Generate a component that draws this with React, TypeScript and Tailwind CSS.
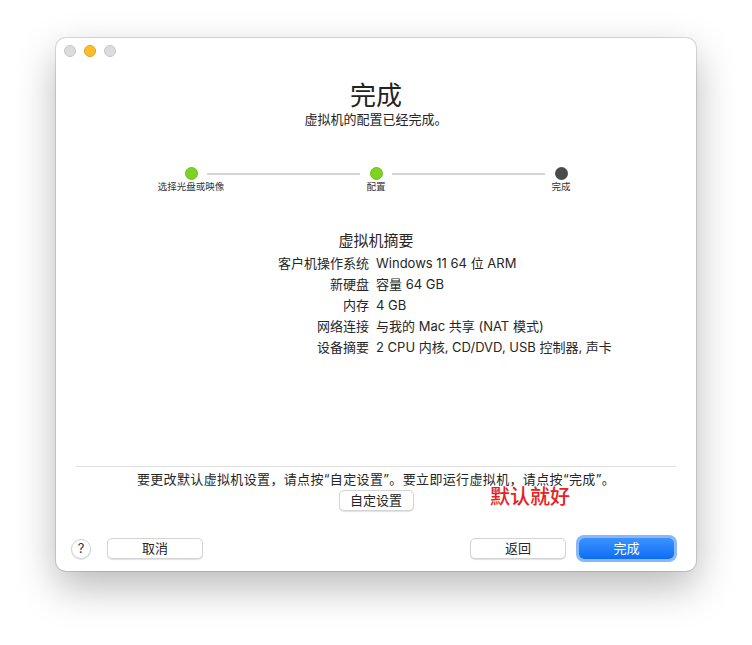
import React from "react";

const font = { fontFamily: 'Inter, "Noto Sans CJK SC", sans-serif' };

const steps = [
  { label: "选择光盘或映像", done: true },
  { label: "配置", done: true },
  { label: "完成", done: false },
];

const summary: [string, string][] = [
  ["客户机操作系统", "Windows 11 64 位 ARM"],
  ["新硬盘", "容量 64 GB"],
  ["内存", "4 GB"],
  ["网络连接", "与我的 Mac 共享 (NAT 模式)"],
  ["设备摘要", "2 CPU 内核, CD/DVD, USB 控制器, 声卡"],
];

function PlainButton({ children, className = "" }: { children: React.ReactNode; className?: string }) {
  return (
    <button
      className={
        "h-[21px] rounded-[5px] border border-[#d4d4d4] bg-white text-[13px] leading-none text-[#262626] shadow-[0_1px_1px_rgba(0,0,0,0.12)] " +
        className
      }
    >
      {children}
    </button>
  );
}

function Stepper() {
  return (
    <div className="flex items-start justify-center">
      {steps.map((s, i) => (
        <React.Fragment key={s.label}>
          {i > 0 && <div className="mx-[9.5px] mt-[5.5px] h-[2px] w-[153px] bg-[#d5d5d5]" />}
          <div className="flex w-[13px] flex-col items-center">
            <div
              className={
                s.done
                  ? "h-[13px] w-[13px] shrink-0 rounded-full border border-[#6cbf1c] bg-[#7ed321]"
                  : "h-[13px] w-[13px] shrink-0 rounded-full bg-[#4b4b4b]"
              }
            />
            <div className="mt-[1px] whitespace-nowrap text-[9.5px] leading-[12px] text-[#333]">{s.label}</div>
          </div>
        </React.Fragment>
      ))}
    </div>
  );
}

export default function App() {
  return (
    <div className="min-h-[645px] w-[752px] bg-white pl-[56px] pt-[38px]" style={font}>
      <div className="relative flex h-[533px] w-[640px] flex-col rounded-[10px] bg-white shadow-[0_16px_40px_rgba(0,0,0,0.28),0_0_0_1px_rgba(0,0,0,0.13)]">
        {/* title bar */}
        <div className="flex h-[26px] items-center gap-[8px] pl-[8px]">
          <span className="h-[12px] w-[12px] rounded-full border border-[#c8c8c8] bg-[#dcdcdc]" />
          <span className="h-[12px] w-[12px] rounded-full border border-[#e0a020] bg-[#febc2e]" />
          <span className="h-[12px] w-[12px] rounded-full border border-[#c8c8c8] bg-[#dcdcdc]" />
        </div>

        <h1 className="mt-[18px] text-center text-[26px] font-normal leading-[28px] text-[#222]">完成</h1>
        <p className="text-center text-[13px] leading-[18px] text-[#262626]">虚拟机的配置已经完成。</p>

        <div className="mt-[39px]">
          <Stepper />
        </div>

        <div className="mt-[38px] text-center text-[15px] leading-[20px] text-[#262626]">虚拟机摘要</div>
        <div className="mt-[2px] grid grid-cols-2 text-[13px] leading-[21px] text-[#262626]">
          {summary.map(([k, v]) => (
            <React.Fragment key={k}>
              <div className="pr-[7px] text-right">{k}</div>
              <div className="whitespace-nowrap">{v}</div>
            </React.Fragment>
          ))}
        </div>

        <div className="flex-1" />

        <div className="mx-[20px] h-px bg-[#e2e2e2]" />
        <p className="mt-[3px] text-center text-[13px] leading-[18px] tracking-[0.35px] text-[#262626]">
          要更改默认虚拟机设置，请点按“自定设置”。要立即运行虚拟机，请点按“完成”。
        </p>
        <div className="mt-[2px] flex justify-center">
          <PlainButton className="w-[75px]">自定设置</PlainButton>
        </div>
        <span className="absolute left-[434px] top-[446px] text-[20px] font-medium leading-[26px] text-[#e8201e]">默认就好</span>

        <div className="mb-[12px] mt-[27px] flex items-center pl-[15px] pr-[22px]">
          <span className="flex h-[20px] w-[20px] items-center justify-center rounded-full border border-[#d4d4d4] bg-white text-[13px] leading-none text-[#333] shadow-[0_1px_1px_rgba(0,0,0,0.12)]">
            ?
          </span>
          <PlainButton className="ml-[16px] w-[96px]">取消</PlainButton>
          <div className="flex-1" />
          <PlainButton className="w-[96px]">返回</PlainButton>
          <button className="ml-[13px] h-[21px] w-[95px] rounded-[5px] bg-gradient-to-b from-[#3b93ff] to-[#0a6cf5] text-[13px] leading-none text-white ring-[3px] ring-[#8ab8f7]">
            完成
          </button>
        </div>
      </div>
    </div>
  );
}
